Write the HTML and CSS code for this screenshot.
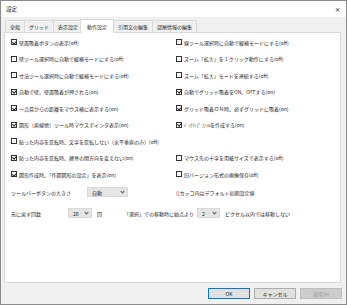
FILE: index.html
```html
<!DOCTYPE html>
<html lang="ja">
<head>
    <meta charset="UTF-8">
    <title>設定</title>
    <link rel="stylesheet" href="styles.css">
</head>
<body>
    <div class="window">
        <div class="titlebar">
            <span class="title">設定</span>
            <span class="close">✕</span>
        </div>

        <div class="tabs">
            <div class="tab">全般</div>
            <div class="tab">グリッド</div>
            <div class="tab">表示設定</div>
            <div class="tab active">動作設定</div>
            <div class="tab">引用文の編集</div>
            <div class="tab">部屋情報の編集</div>
        </div>

        <div class="panel">
            <div class="options">
                <div class="opt"><span class="cb on"></span>壁面吸着ボタンの表示(off)</div>
                <div class="opt"><span class="cb"></span>線ツール選択時に自動で縦横モードにする(off)</div>

                <div class="opt"><span class="cb"></span>壁ツール選択時に自動で縦横モードにする(off)</div>
                <div class="opt"><span class="cb"></span>ズーム「拡大」を１クリック動作にする(off)</div>

                <div class="opt"><span class="cb"></span>寸法ツール選択時に自動で縦横モードにする(off)</div>
                <div class="opt"><span class="cb"></span>ズーム「拡大」モードを連続する(off)</div>

                <div class="opt"><span class="cb on"></span>自動で壁、壁面吸着が押される(on)</div>
                <div class="opt"><span class="cb on"></span>自動でグリッド吸着をON、OFFする(on)</div>

                <div class="opt"><span class="cb on"></span>一点目からの距離をマウス横に表示する(on)</div>
                <div class="opt"><span class="cb on"></span>グリッド吸着ＯＮ時、必ずグリッドに吸着(on)</div>

                <div class="opt"><span class="cb on"></span>図形（直線他）ツール時マウスポインタ表示(on)</div>
                <div class="opt"><span class="cb on"></span><span class="narrow">ﾊﾞｯｸｱｯﾌﾟ ﾌｧｲﾙ</span>を作成する(on)</div>

                <div class="opt wide"><span class="cb"></span>貼った内容を反転時、文字を反転しない（水平垂直のみ）(off)</div>

                <div class="opt"><span class="cb on"></span>貼った内容を反転時、建具の開方向を変えない(on)</div>
                <div class="opt"><span class="cb"></span>マウス先の十字を用紙サイズで表示する(off)</div>

                <div class="opt"><span class="cb on"></span>図形作成時、「作図図形の設定」を表示(on)</div>
                <div class="opt"><span class="cb"></span>旧バージョン形式の画像保存(off)</div>
            </div>

            <div class="field-row">
                <div class="field-left">
                    <span class="label toolbar-label">ツールバーボタンの大きさ</span>
                    <div class="combo combo-auto">自動<span class="arrow"></span></div>
                </div>
                <span class="note">()カッコ内はデフォルト初期設定値</span>
            </div>

            <div class="field-row second">
                <span class="label undo-label">元に戻す回数</span>
                <div class="combo combo-undo">20<span class="arrow"></span></div>
                <span class="unit times">回</span>
                <span class="label move-label">「選択」での移動時に始点より</span>
                <div class="combo combo-px">2<span class="arrow"></span></div>
                <span class="unit">ピクセル以内では移動しない</span>
            </div>
        </div>

        <div class="buttons">
            <button class="btn default">OK</button>
            <button class="btn">キャンセル</button>
            <button class="btn" disabled>適用(A)</button>
        </div>
    </div>
</body>
</html>
```

FILE: styles.css
```css
* {
    box-sizing: border-box;
}

body {
    margin: 0;
    font-family: "Noto Sans CJK JP", "Noto Sans", sans-serif;
    font-size: 5px;
    color: #262626;
    background-color: #ffffff;
}

.window {
    width: 347px;
    height: 305px;
    border: 1px solid #8a8a8a;
    background-color: #f0f0f0;
    display: flex;
    flex-direction: column;
}

.titlebar {
    height: 16px;
    background-color: #ffffff;
    display: flex;
    align-items: center;
    justify-content: space-between;
    padding: 0 6px 0 5px;
}

.title {
    font-size: 5.5px;
}

.close {
    font-family: "DejaVu Sans", sans-serif;
    font-size: 6px;
    color: #333;
}

.tabs {
    display: flex;
    align-items: flex-end;
    height: 15px;
    padding: 0 0 0 4px;
}

.tab {
    height: 12px;
    line-height: 11px;
    padding: 0 4px;
    border: 1px solid #d9d9d9;
    border-bottom: none;
    margin-right: -1px;
    background-color: #f0f0f0;
}

.tab.active {
    height: 14px;
    line-height: 13px;
    background-color: #ffffff;
    margin: 0 -1px 0 -2px;
    padding: 0 6px;
    position: relative;
    z-index: 1;
    top: 1px;
}

.panel {
    margin: 0 5px 0 3px;
    height: 251px;
    background-color: #ffffff;
    border: 1px solid #d9d9d9;
    padding: 1px 0 0 6px;
}

.options {
    display: grid;
    grid-template-columns: 165px 1fr;
    grid-auto-rows: 16.5px;
}

.opt {
    display: flex;
    align-items: center;
    white-space: nowrap;
}

.opt.wide {
    grid-column: 1 / 3;
}

.cb {
    width: 6px;
    height: 6px;
    border: 1px solid #333;
    background-color: #fff;
    margin-right: 2px;
    flex-shrink: 0;
    position: relative;
}

.cb.on::after {
    content: "";
    position: absolute;
    left: 1px;
    top: -0.5px;
    width: 1.6px;
    height: 3px;
    border-right: 1px solid #222;
    border-bottom: 1px solid #222;
    transform: rotate(40deg);
}

.narrow {
    font-size: 4.2px;
}

.field-row {
    display: flex;
    align-items: center;
    height: 12px;
    margin-top: 3.5px;
    white-space: nowrap;
}

.field-row.second {
    margin-top: 9px;
}

.field-left {
    display: flex;
    align-items: center;
    width: 165px;
}

.toolbar-label {
    width: 76px;
}

.undo-label {
    width: 57px;
}

.move-label {
    width: 73px;
}

.combo {
    height: 10px;
    background-color: #e5e5e5;
    border: 1px solid #dadada;
    display: flex;
    align-items: center;
    justify-content: space-between;
    padding: 0 3px 0 4px;
}

.combo-auto {
    width: 41px;
}

.combo-undo {
    width: 24px;
}

.combo-px {
    width: 23px;
}

.arrow {
    width: 3px;
    height: 3px;
    border-right: 1px solid #555;
    border-bottom: 1px solid #555;
    transform: rotate(45deg);
    margin-top: -2px;
}

.unit {
    margin: 0 5px;
}

.unit.times {
    margin-right: 22px;
}

.buttons {
    display: flex;
    justify-content: flex-end;
    gap: 4px;
    padding: 5px 4px 0 0;
}

.btn {
    width: 42px;
    height: 11px;
    padding: 0;
    font-family: inherit;
    font-size: 5px;
    color: #262626;
    background-color: #e1e1e1;
    border: 1px solid #adadad;
}

.btn.default {
    border-color: #0078d7;
}

.btn:disabled {
    color: #a0a0a0;
    background-color: #cccccc;
    border-color: #bfbfbf;
}
```
